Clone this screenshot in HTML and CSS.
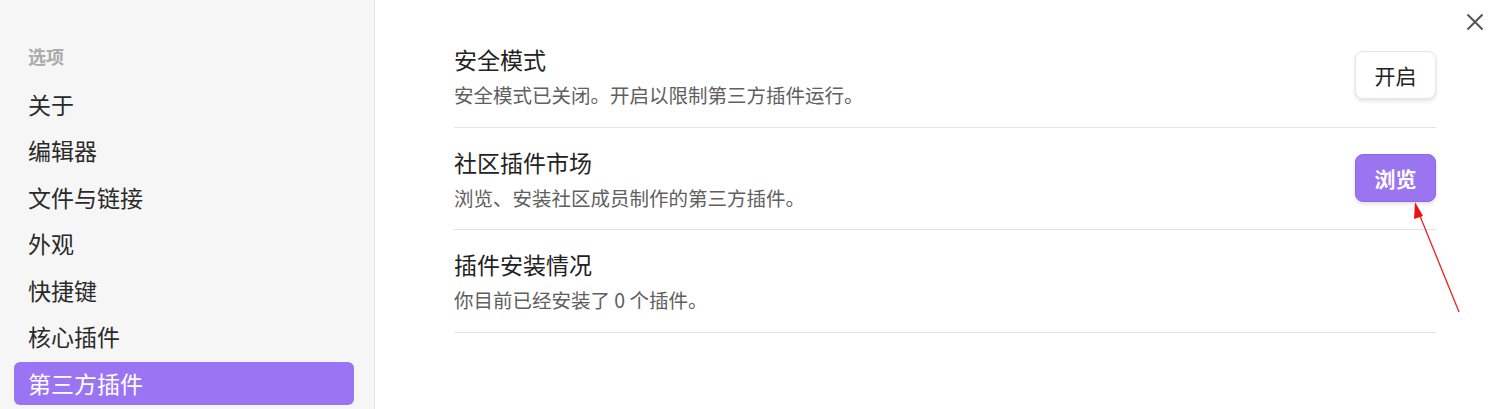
FILE: index.html
```html
<!DOCTYPE html>
<html lang="zh-CN">
<head>
<meta charset="utf-8">
<title>设置 - 第三方插件</title>
<link rel="stylesheet" href="styles.css">
</head>
<body>
<div class="modal">
  <nav class="sidebar">
    <div class="nav-header">选项</div>
    <div class="nav-item">关于</div>
    <div class="nav-item">编辑器</div>
    <div class="nav-item">文件与链接</div>
    <div class="nav-item">外观</div>
    <div class="nav-item">快捷键</div>
    <div class="nav-item">核心插件</div>
    <div class="nav-item is-active">第三方插件</div>
  </nav>
  <main class="content">
    <div class="setting">
      <div class="info">
        <div class="name">安全模式</div>
        <div class="desc">安全模式已关闭。开启以限制第三方插件运行。</div>
      </div>
      <button class="btn">开启</button>
    </div>
    <div class="setting">
      <div class="info">
        <div class="name">社区插件市场</div>
        <div class="desc">浏览、安装社区成员制作的第三方插件。</div>
      </div>
      <button class="btn btn-cta">浏览</button>
    </div>
    <div class="setting">
      <div class="info">
        <div class="name">插件安装情况</div>
        <div class="desc">你目前已经安装了 0 个插件。</div>
      </div>
    </div>
  </main>
  <button class="close" aria-label="关闭">
    <svg width="18" height="18" viewBox="0 0 18 18"><path d="M1.5 1.5 L16.5 16.5 M16.5 1.5 L1.5 16.5" stroke="#555" stroke-width="2" fill="none"/></svg>
  </button>
  <svg class="annotation" width="66" height="120" viewBox="0 0 66 120">
    <line x1="59" y1="113" x2="20" y2="17" stroke="#f02020" stroke-width="1.3"/>
    <polygon points="15,3 23,17 14,20" fill="#f01010"/>
  </svg>
</div>
</body>
</html>
```
FILE: styles.css
```css
* { box-sizing: border-box; }
html, body {
  margin: 0;
  padding: 0;
  background: #ffffff;
}
body {
  font-family: "Noto Sans CJK SC", "Noto Sans", sans-serif;
  color: #222222;
  overflow: hidden;
}
.modal {
  position: relative;
  display: flex;
  width: 1512px;
  height: 409px;
  overflow: hidden;
}
.sidebar {
  width: 375px;
  flex: none;
  background: #f6f6f6;
  border-right: 1px solid #e3e3e3;
  padding: 44px 20px 0 14px;
}
.nav-header {
  font-size: 18px;
  font-weight: 700;
  color: #ababab;
  line-height: 24px;
  padding-left: 14px;
  margin-bottom: 14.5px;
}
.nav-item {
  height: 43px;
  line-height: 43px;
  margin-bottom: 3.5px;
  padding-left: 14px;
  font-size: 23px;
  color: #2a2a2a;
  border-radius: 6px;
  white-space: nowrap;
}
.nav-item.is-active {
  background: #9b74f4;
  color: #ffffff;
}
.content {
  flex: 1;
  padding: 25px 76px 0 79px;
}
.setting {
  display: flex;
  align-items: center;
  padding: 18px 0 16.5px;
  border-bottom: 1px solid #e3e3e3;
}
.info {
  flex: 1;
}
.name {
  font-size: 23px;
  line-height: 32px;
  color: #222222;
}
.desc {
  font-size: 19.5px;
  line-height: 30px;
  margin-top: 5px;
  color: #606060;
}
.btn {
  width: 81px;
  height: 48px;
  margin-bottom: 3px;
  border: 1px solid #e6e6e6;
  border-radius: 8px;
  background: #ffffff;
  box-shadow: 0 2px 4px rgba(0,0,0,0.12);
  font-family: "Noto Sans CJK SC", sans-serif;
  font-size: 21px;
  color: #222222;
  padding: 0;
}
.btn-cta {
  background: #9b74f1;
  border-color: #8f68e4;
  color: #ffffff;
  font-weight: 700;
}
.close {
  position: absolute;
  top: 13px;
  right: 28px;
  width: 18px;
  height: 18px;
  padding: 0;
  border: 0;
  background: none;
}
.close svg { display: block; }
.annotation {
  position: absolute;
  left: 1400px;
  top: 199px;
}
```
